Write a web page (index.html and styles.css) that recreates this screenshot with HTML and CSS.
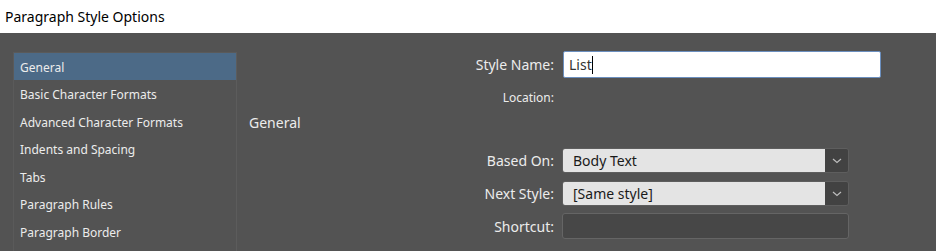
FILE: index.html
```html
<!DOCTYPE html>
<html>
<head>
<meta charset="utf-8">
<link rel="stylesheet" href="styles.css">
</head>
<body>
<div class="titlebar">Paragraph Style Options</div>
<div class="main">
  <ul class="sidebar">
    <li class="item selected">General</li>
    <li class="item">Basic Character Formats</li>
    <li class="item">Advanced Character Formats</li>
    <li class="item">Indents and Spacing</li>
    <li class="item">Tabs</li>
    <li class="item">Paragraph Rules</li>
    <li class="item">Paragraph Border</li>
  </ul>
  <div class="panel">
    <div class="row row-name">
      <span class="label">Style Name:</span>
      <div class="textbox"><span class="caret">List</span></div>
    </div>
    <div class="row row-loc">
      <span class="label small">Location:</span>
    </div>
    <div class="heading">General</div>
    <div class="row row-based">
      <span class="label">Based On:</span>
      <div class="select">
        <span class="value">Body Text</span>
        <span class="btn"><svg width="10" height="6" viewBox="0 0 10 6"><path d="M1 1 L5 4.5 L9 1" fill="none" stroke="#bdbdbd" stroke-width="1.2"/></svg></span>
      </div>
    </div>
    <div class="row row-next">
      <span class="label">Next Style:</span>
      <div class="select">
        <span class="value">[Same style]</span>
        <span class="btn"><svg width="10" height="6" viewBox="0 0 10 6"><path d="M1 1 L5 4.5 L9 1" fill="none" stroke="#bdbdbd" stroke-width="1.2"/></svg></span>
      </div>
    </div>
    <div class="row row-short">
      <span class="label">Shortcut:</span>
      <div class="shortcut"></div>
    </div>
  </div>
</div>
</body>
</html>
```
FILE: styles.css
```css
html, body {
  margin: 0;
  padding: 0;
  background: #535353;
  font-family: "Noto Sans", "Open Sans", sans-serif;
  overflow: hidden;
}
.titlebar {
  height: 33px;
  background: #ffffff;
  color: #000;
  font-size: 14px;
  line-height: 33px;
  padding-left: 5px;
  box-sizing: border-box;
}
.main {
  display: flex;
  height: 218px;
  padding: 19px 0 0 13px;
  box-sizing: border-box;
}
.sidebar {
  list-style: none;
  margin: 0;
  padding: 0;
  width: 224px;
  border-left: 1px solid #5a5a5a;
  border-right: 1px solid #5c5c5c;
  border-top: 1px solid #5a5a5a;
  box-sizing: border-box;
  flex: none;
}
.item {
  height: 27.5px;
  line-height: 29px;
  padding-left: 6px;
  font-size: 12px;
  color: #ececec;
  white-space: nowrap;
}
.item.selected {
  background: #4c6a87;
  height: 27px;
}
.panel {
  flex: 1;
  display: flex;
  flex-direction: column;
}
.row {
  display: flex;
  align-items: center;
  gap: 8px;
}
.label {
  width: 317px;
  text-align: right;
  font-size: 14px;
  color: #ececec;
  flex: none;
}
.label.small {
  font-size: 12px;
}
.row-name { height: 27px; margin-top: -1px; gap: 9px; }
.textbox {
  width: 318px;
  height: 27px;
  box-sizing: border-box;
  background: #ffffff;
  border: 1px solid #6b8fbf;
  border-radius: 2px;
  padding-left: 5px;
  display: flex;
  align-items: center;
  font-size: 14px;
  color: #333;
}
.caret {
  border-right: 1px solid #000;
  line-height: 18px;
}
.row-loc { height: 22px; margin-top: 8px; }
.heading {
  height: 22px;
  line-height: 22px;
  margin-top: 4px;
  padding-left: 12px;
  font-size: 14px;
  color: #ececec;
}
.row-based { height: 25px; margin-top: 14px; }
.row-next { height: 25px; margin-top: 8px; }
.row-short { height: 26px; margin-top: 7px; }
.select {
  width: 287px;
  height: 25px;
  box-sizing: border-box;
  border: 1px solid #5e5e5e;
  border-radius: 3px;
  display: flex;
  overflow: hidden;
}
.value {
  flex: 1;
  background: #e4e4e4;
  color: #1a1a1a;
  font-size: 14px;
  line-height: 23px;
  padding-left: 10px;
}
.btn {
  width: 23px;
  background: #424242;
  display: flex;
  align-items: center;
  justify-content: center;
}
.shortcut {
  width: 287px;
  height: 26px;
  box-sizing: border-box;
  border: 1px solid #656565;
  border-radius: 3px;
  background: #474747;
}
```
